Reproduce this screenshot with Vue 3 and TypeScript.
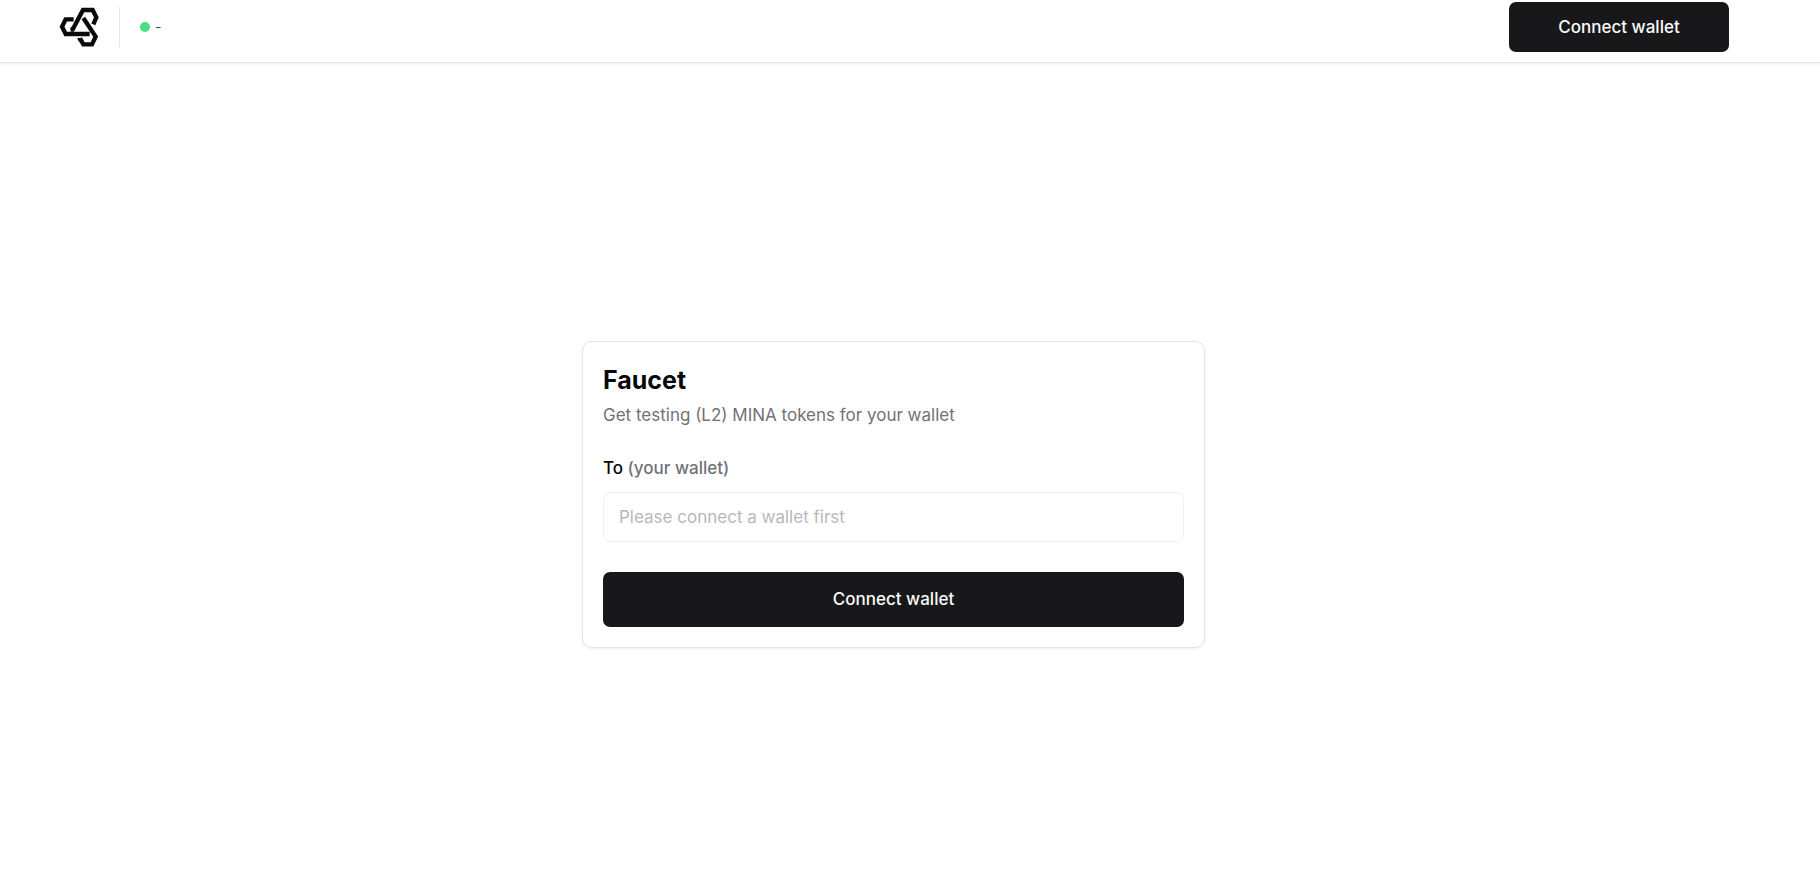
<script setup lang="ts">
import { ref } from 'vue'

const network = ref('-')
const recipient = ref('')
</script>

<template>
  <div class="page">
    <header class="topbar">
      <div class="brand">
        <svg class="logo" viewBox="27 21 120 120" role="img" aria-label="Protokit">
          <g fill="none" stroke="#0b0b0d" stroke-width="13">
            <path d="M66 92 L99 30 H128 L139 52 L130 73" />
            <path d="M71 58 H47 L36 80 L47 102 H119" />
            <path d="M100 54 L137 110 L126 133 H100 L90 115" />
          </g>
          <path d="M81 114 H95 L97 120 L88 127 Z M62 80 L70 84 V95 H62 Z" fill="#0b0b0d" />
        </svg>
        <span class="divider"></span>
        <span class="status"><span class="dot"></span><span>{{ network }}</span></span>
      </div>
      <button type="button" class="button header-button">Connect wallet</button>
    </header>
    <main class="content">
      <form class="card" @submit.prevent>
        <h1>Faucet</h1>
        <p>Get testing (L2) MINA tokens for your wallet</p>
        <label for="recipient">To <span>(your wallet)</span></label>
        <input id="recipient" v-model="recipient" type="text" placeholder="Please connect a wallet first" disabled />
        <button type="submit" class="button submit">Connect wallet</button>
      </form>
    </main>
  </div>
</template>

<style>
body {
  background: #fff;
}
</style>

<style scoped>
.page {
  display: flex;
  flex-direction: column;
  min-height: 100vh;
  font-family: Inter, sans-serif;
  font-size: 17px;
  line-height: 24px;
  color: #09090b;
}

.topbar {
  display: flex;
  align-items: center;
  justify-content: space-between;
  box-sizing: border-box;
  padding: 2px 91px 10px 59px;
  border-bottom: 1px solid #e4e4e7;
  box-shadow: 0 1px 3px rgba(0, 0, 0, 0.08);
}

.brand {
  display: flex;
  align-items: center;
}

.logo {
  display: block;
  width: 40px;
  height: 40px;
}

.divider {
  width: 1px;
  height: 40px;
  margin: 0 20px;
  background: #e4e4e7;
}

.status {
  display: flex;
  align-items: center;
  gap: 5px;
  font-size: 14px;
  line-height: 20px;
  color: #475569;
}

.dot {
  width: 10px;
  height: 10px;
  border-radius: 50%;
  background: #4ade80;
}

.button {
  border: 0;
  border-radius: 7px;
  background: #18181b;
  color: #fafafa;
  font: inherit;
  font-weight: 500;
  cursor: pointer;
}

.header-button {
  width: 220px;
  height: 50px;
}

.content {
  display: flex;
  flex: 1;
  align-items: center;
  justify-content: center;
  padding: 53px 33px 0 0;
}

.card {
  display: flex;
  flex-direction: column;
  box-sizing: border-box;
  width: 100%;
  max-width: 623px;
  padding: 20px;
  border: 1px solid #e4e4e7;
  border-radius: 10px;
  box-shadow: 0 1px 3px rgba(0, 0, 0, 0.08);
}

h1 {
  margin: 0;
  font-size: 25px;
  font-weight: 700;
  line-height: 36px;
}

p {
  margin: 5px 0 29px;
  color: #71717a;
}

label {
  margin-bottom: 12px;
  font-weight: 500;
}

label span {
  color: #71717a;
}

input {
  box-sizing: border-box;
  width: 100%;
  height: 50px;
  padding: 0 15px;
  border: 1px solid #e4e4e7;
  border-radius: 7px;
  background: transparent;
  color: inherit;
  font: inherit;
  opacity: 0.5;
}

input::placeholder {
  color: #71717a;
  opacity: 1;
}

.submit {
  height: 55px;
  margin-top: 30px;
}
</style>
